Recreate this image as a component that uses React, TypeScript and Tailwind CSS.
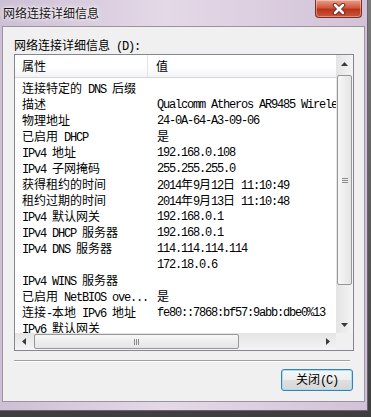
import React from 'react';

// 网络连接详细信息 的列表数据
const rows: [string, string][] = [
  ['连接特定的 DNS 后缀', ''],
  ['描述', 'Qualcomm Atheros AR9485 Wireless Network Adapter'],
  ['物理地址', '24-0A-64-A3-09-06'],
  ['已启用 DHCP', '是'],
  ['IPv4 地址', '192.168.0.108'],
  ['IPv4 子网掩码', '255.255.255.0'],
  ['获得租约的时间', '2014年9月12日 11:10:49'],
  ['租约过期的时间', '2014年9月13日 11:10:48'],
  ['IPv4 默认网关', '192.168.0.1'],
  ['IPv4 DHCP 服务器', '192.168.0.1'],
  ['IPv4 DNS 服务器', '114.114.114.114'],
  ['', '172.18.0.6'],
  ['IPv4 WINS 服务器', ''],
  ['已启用 NetBIOS ove...', '是'],
  ['连接-本地 IPv6 地址', 'fe80::7868:bf57:9abb:dbe0%13'],
  ['IPv6 默认网关', ''],
];

const CJK = /([\u3000-\u9fff\uff00-\uffef]+)/;

// 宋体风格: 西文半角等宽, 中文全角
function Txt({ s }: { s: string }) {
  return (
    <>
      {s
        .split(CJK)
        .filter(Boolean)
        .map((p, i) =>
          CJK.test(p) ? (
            <span key={i} className="font-['Noto_Sans_CJK_SC',sans-serif]">
              {p}
            </span>
          ) : (
            <span key={i} className="font-['Liberation_Mono',monospace] tracking-[-1.2px]">
              {p}
            </span>
          )
        )}
    </>
  );
}

function Arrow({ dir }: { dir: 'up' | 'down' | 'left' | 'right' }) {
  const pts = {
    up: '0,4 7,4 3.5,0',
    down: '0,0 7,0 3.5,4',
    left: '4,0 4,7 0,3.5',
    right: '0,0 0,7 4,3.5',
  }[dir];
  const vertical = dir === 'up' || dir === 'down';
  return (
    <svg width={vertical ? 7 : 4} height={vertical ? 4 : 7} viewBox={vertical ? '0 0 7 4' : '0 0 4 7'}>
      <polygon points={pts} fill="#3a3a3a" />
    </svg>
  );
}

function App() {
  return (
    <div className="w-[371px] h-[417px] bg-[linear-gradient(180deg,#7a7a7a,#3e3e3e)] overflow-hidden">
      {/* --- 窗口 --- */}
      <div className="w-[368px] h-[411px] px-[2px] flex flex-col border-r border-b border-[#6d5f70] bg-[linear-gradient(90deg,#cdbfd4,#e4d9e7_45%,#dccfe0_70%,#d2c2d8)]">
        {/* 标题栏 */}
        <div className="h-[26px] flex items-start justify-between">
          <div className="pl-[1px] pt-[5px] text-[12px] leading-4 text-[#151515] font-['Noto_Sans_CJK_SC',sans-serif] [text-shadow:0_0_6px_#fff,0_0_3px_#fff]">
            网络连接详细信息
          </div>
          <div className="mr-[3px] w-[47px] h-[18px] rounded-b-[4px] border border-t-0 border-[#7a2f24] bg-[linear-gradient(180deg,#e9a08c,#d0583e_45%,#b83419_55%,#c9573c)] flex items-center justify-center shadow-[inset_0_0_0_1px_rgba(255,255,255,0.35)]">
            <svg width="14" height="12" viewBox="0 0 14 12">
              <path d="M3 2 L11 10 M11 2 L3 10" stroke="#6b2a1f" strokeWidth="4.5" strokeLinecap="round" />
              <path d="M3 2 L11 10 M11 2 L3 10" stroke="#ffffff" strokeWidth="2.5" strokeLinecap="round" />
            </svg>
          </div>
        </div>

        {/* 客户区 */}
        <div className="h-[376px] border border-[#9a94a0] bg-[#f0f0f0] pl-[11px] pr-[9px] pt-[10px] flex flex-col text-[12px] text-black">
          <div className="h-4 leading-4 whitespace-pre">
            <Txt s="网络连接详细信息 (D):" />
          </div>

          {/* 列表 */}
          <div className="mt-[1px] w-[340px] h-[297px] border border-[#828790] bg-white flex flex-col">
            <div className="h-[278px] flex">
              <div className="flex-1 overflow-hidden flex flex-col">
                <div className="h-[23px] shrink-0 flex border-b border-[#d5d5d5] bg-[linear-gradient(180deg,#ffffff,#ffffff_50%,#f3f4f6)]">
                  <div className="w-[133px] shrink-0 pl-[7px] flex items-center border-r border-[#e3e5e8] font-['Noto_Sans_CJK_SC',sans-serif]">
                    属性
                  </div>
                  <div className="pl-[8px] flex items-center font-['Noto_Sans_CJK_SC',sans-serif]">值</div>
                </div>
                <div className="pt-[2px]">
                  {rows.map(([k, v], i) => (
                    <div key={i} className="h-4 leading-4 flex whitespace-pre">
                      <div className="w-[133px] shrink-0 pl-[7px]">
                        <Txt s={k} />
                      </div>
                      <div className="pl-[9px]">
                        <Txt s={v} />
                      </div>
                    </div>
                  ))}
                </div>
              </div>

              {/* 垂直滚动条 */}
              <div className="w-[17px] shrink-0 flex flex-col bg-[linear-gradient(90deg,#e4e4e4,#f4f4f4)]">
                <div className="h-[17px] flex items-center justify-center">
                  <Arrow dir="up" />
                </div>
                <div className="flex-1 px-[1px] pt-[3px]">
                  <div className="h-[210px] rounded-[2px] border border-[#979797] bg-[linear-gradient(90deg,#f7f7f7,#e4e4e4)] flex flex-col items-center justify-center gap-[1px]">
                    <div className="w-[6px] h-[1px] bg-[#8a8a8a]" />
                    <div className="w-[6px] h-[1px] bg-[#8a8a8a]" />
                    <div className="w-[6px] h-[1px] bg-[#8a8a8a]" />
                  </div>
                </div>
                <div className="h-[17px] flex items-center justify-center">
                  <Arrow dir="down" />
                </div>
              </div>
            </div>

            {/* 水平滚动条 */}
            <div className="h-[17px] flex">
              <div className="flex-1 flex bg-[linear-gradient(180deg,#e4e4e4,#f4f4f4)]">
                <div className="w-[17px] flex items-center justify-center">
                  <Arrow dir="left" />
                </div>
                <div className="flex-1 py-[1px] pl-[2px]">
                  <div className="w-[205px] h-full rounded-[2px] border border-[#979797] bg-[linear-gradient(180deg,#f7f7f7,#e4e4e4)] flex items-center justify-center gap-[1px]">
                    <div className="w-[1px] h-[6px] bg-[#8a8a8a]" />
                    <div className="w-[1px] h-[6px] bg-[#8a8a8a]" />
                    <div className="w-[1px] h-[6px] bg-[#8a8a8a]" />
                  </div>
                </div>
                <div className="w-[17px] flex items-center justify-center">
                  <Arrow dir="right" />
                </div>
              </div>
              <div className="w-[17px] bg-[#f0f0f0]" />
            </div>
          </div>

          {/* 分隔线 */}
          <div className="mt-[9px] w-[336px] h-[2px] border-t border-[#a0a0a0] border-b border-b-white" />

          {/* 按钮 */}
          <div className="mt-[7px] flex justify-end pr-[2px]">
            <button className="w-[72px] h-[22px] rounded-[3px] border border-[#3c7fb1] bg-[linear-gradient(180deg,#f6f6f6,#eeeeee_50%,#e0e0e0_51%,#d6d6d6)] shadow-[inset_0_0_0_1px_#9fe0f7] whitespace-pre leading-4">
              <Txt s="关闭(C)" />
            </button>
          </div>
        </div>
      </div>
    </div>
  );
}

export default App;
